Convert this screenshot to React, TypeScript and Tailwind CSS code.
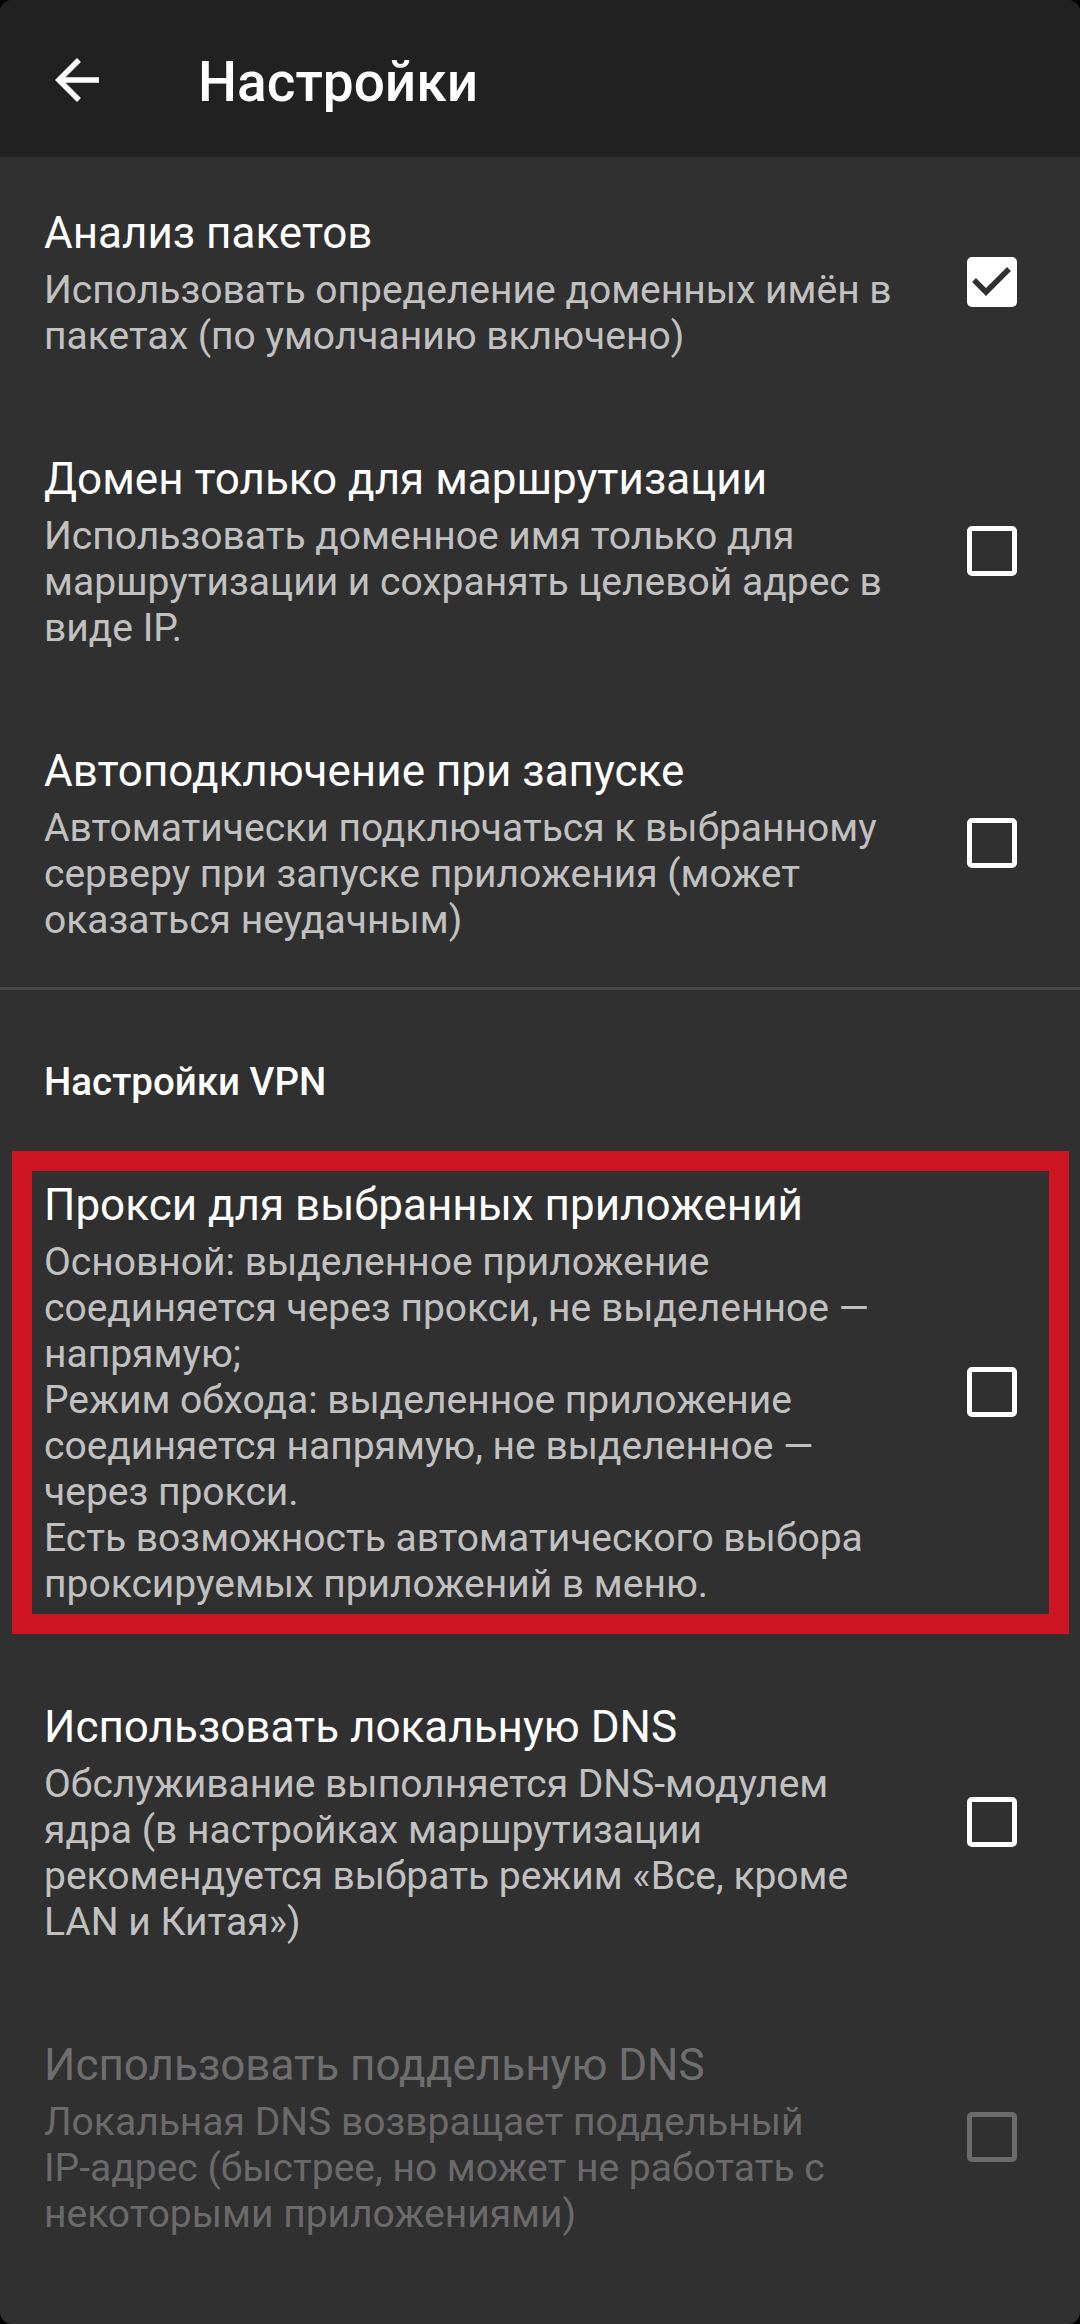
import React from "react";

interface Pref {
  title: string;
  summary: string[];
  checked?: boolean;
  disabled?: boolean;
  highlight?: boolean;
}

const general: Pref[] = [
  {
    title: "Анализ пакетов",
    summary: ["Использовать определение доменных имён в", "пакетах (по умолчанию включено)"],
    checked: true,
  },
  {
    title: "Домен только для маршрутизации",
    summary: [
      "Использовать доменное имя только для",
      "маршрутизации и сохранять целевой адрес в",
      "виде IP.",
    ],
  },
  {
    title: "Автоподключение при запуске",
    summary: [
      "Автоматически подключаться к выбранному",
      "серверу при запуске приложения (может",
      "оказаться неудачным)",
    ],
  },
];

const vpn: Pref[] = [
  {
    title: "Прокси для выбранных приложений",
    summary: [
      "Основной: выделенное приложение",
      "соединяется через прокси, не выделенное —",
      "напрямую;",
      "Режим обхода: выделенное приложение",
      "соединяется напрямую, не выделенное —",
      "через прокси.",
      "Есть возможность автоматического выбора",
      "проксируемых приложений в меню.",
    ],
    highlight: true,
  },
  {
    title: "Использовать локальную DNS",
    summary: [
      "Обслуживание выполняется DNS-модулем",
      "ядра (в настройках маршрутизации",
      "рекомендуется выбрать режим «Все, кроме",
      "LAN и Китая»)",
    ],
  },
  {
    title: "Использовать поддельную DNS",
    summary: [
      "Локальная DNS возвращает поддельный",
      "IP-адрес (быстрее, но может не работать с",
      "некоторыми приложениями)",
    ],
    disabled: true,
  },
];

function CheckBox({ checked, disabled }: { checked?: boolean; disabled?: boolean }) {
  if (checked) {
    return (
      <div className="w-[50px] h-[50px] -mt-[3px] rounded-[5px] bg-white flex items-center justify-center">
        <svg width="50" height="50" viewBox="0 0 50 50">
          <path d="M7 23 L19 35 L42 12" fill="none" stroke="#303030" strokeWidth="5.5" />
        </svg>
      </div>
    );
  }
  return (
    <div
      className={`w-[50px] h-[50px] -mt-[3px] rounded-[5px] border-[5px] ${
        disabled ? "border-[#6b6b6b]" : "border-white"
      }`}
    />
  );
}

function PrefRow({ pref }: { pref: Pref }) {
  return (
    <div className="relative flex items-center pl-[44px] pr-[63px] pt-[50px] pb-[44px]">
      {/* red annotation frame from the screenshot */}
      {pref.highlight && (
        <div className="absolute left-[12px] right-[11px] top-[22px] bottom-[17px] border-[20px] border-[#cc1422] pointer-events-none" />
      )}
      <div className="flex-1">
        <div
          className={`text-[44px] leading-[52px] mb-[8px] whitespace-nowrap ${
            pref.disabled ? "text-[#6e6e6e]" : "text-white"
          }`}
        >
          {pref.title}
        </div>
        <div
          className={`text-[39px] leading-[46px] ${
            pref.disabled ? "text-[#6a6a6a]" : "text-[#c1c1c1]"
          }`}
        >
          {pref.summary.map((line, i) => (
            <div key={i} className="whitespace-nowrap">
              {line}
            </div>
          ))}
        </div>
      </div>
      <CheckBox checked={pref.checked} disabled={pref.disabled} />
    </div>
  );
}

export default function App() {
  return (
    <div className="w-[1080px] h-[2324px] bg-black" style={{ fontFamily: "Roboto, 'Noto Sans', sans-serif" }}>
      <div className="w-full h-full rounded-[12px] overflow-hidden bg-[#303030] flex flex-col">
        {/* HEADER */}
        <div className="h-[157px] shrink-0 bg-[#212121] flex items-center pl-[44px]">
          <svg width="66" height="66" viewBox="0 0 24 24" className="mt-[2px]">
            <path
              fill="#ffffff"
              d="M20 11H7.83l5.59-5.59L12 4l-8 8 8 8 1.41-1.41L7.83 13H20v-2z"
            />
          </svg>
          <h1 className="ml-[88px] mt-[8px] text-[55px] font-medium text-white leading-none">Настройки</h1>
        </div>

        {general.map((p) => (
          <PrefRow key={p.title} pref={p} />
        ))}

        <div className="h-[3px] bg-[#464646]" />

        <div className="pl-[44px] pt-[69px] pb-[24px] text-[38.5px] leading-[46px] font-medium text-white">
          Настройки VPN
        </div>

        {vpn.map((p) => (
          <PrefRow key={p.title} pref={p} />
        ))}
      </div>
    </div>
  );
}
